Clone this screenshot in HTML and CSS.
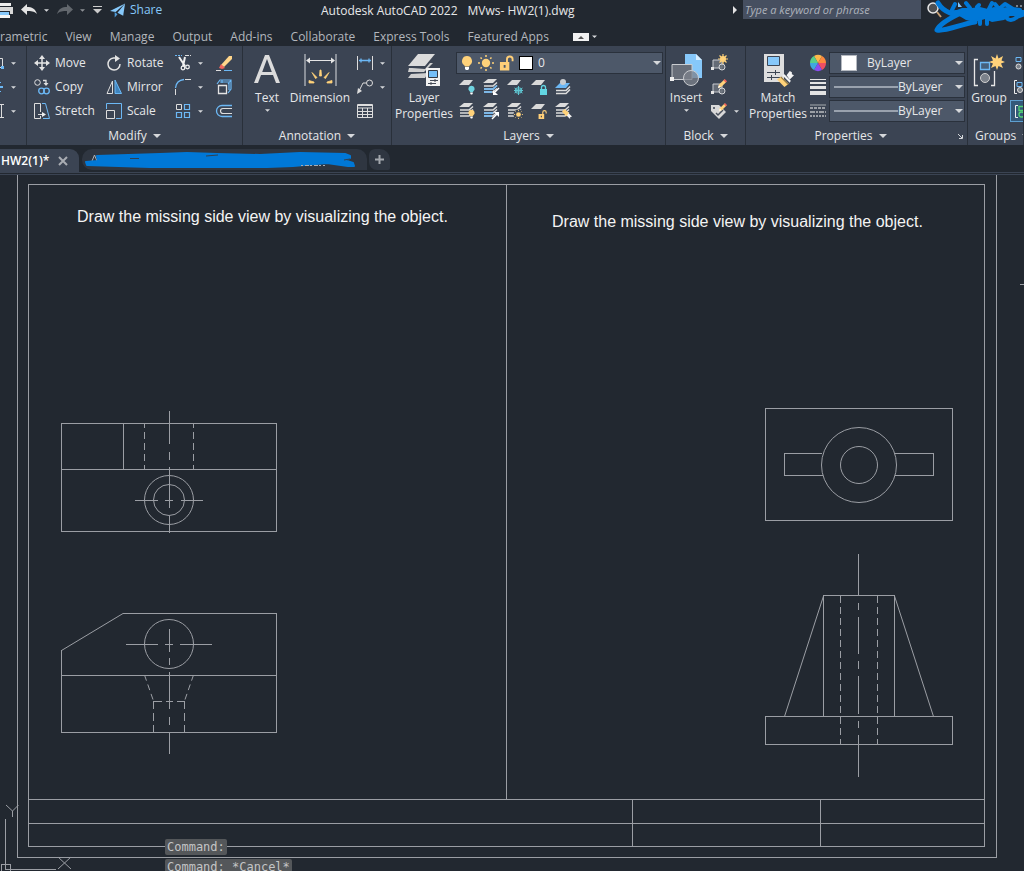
FILE: index.html
```html
<!DOCTYPE html>
<html lang="en">
<head>
<meta charset="utf-8">
<title>Autodesk AutoCAD 2022 - MVws- HW2(1).dwg</title>
<link rel="stylesheet" href="styles.css">
</head>
<body>
<svg class="defs" aria-hidden="true">
  <symbol id="down" viewBox="0 0 8 4"><path d="M0 0h8L4 4z" fill="#d6d8db"/></symbol>
  <symbol id="sheet" viewBox="0 0 16 16"><path d="M5 1h9l-4 5H0z" fill="#d9d9d9"/></symbol>
  <symbol id="stack" viewBox="0 0 16 16"><path d="M5 0h9l-4 4H0z" fill="#dcdcdc"/><path d="M1 7h9l4-3.500M1 10h9l4-3.500M1 13h9l4-3.500" fill="none" stroke="#dcdcdc" stroke-width="1.500"/></symbol>
  <symbol id="bulb" viewBox="0 0 12 16"><path d="M6 1a5 5 0 0 1 3 9L8 11.500H4L3 10a5 5 0 0 1 3-9z" fill="currentColor"/><path d="M4 12h4v2L7 15H5l-1-1z" fill="#fff"/></symbol>
  <symbol id="sun" viewBox="0 0 16 16"><circle cx="8" cy="8" r="4.200" fill="#ffd27a"/><path d="M8 0v2M8 14v2M0 8h2M14 8h2M2.500 2.500l1.300 1.300M12.200 12.200l1.300 1.300M2.500 13.500l1.300-1.300M12.200 3.800l1.300-1.300" stroke="#ffd27a" stroke-width="1.500"/></symbol>
  <symbol id="unlock" viewBox="0 0 16 16"><path d="M1 7h10v9H1zM5 10v3h2v-3z" fill="#ffcf78" fill-rule="evenodd"/><path d="M8.500 7V4a3 3 0 0 1 6 0v2" fill="none" stroke="#ffcf78" stroke-width="2"/></symbol>
  <symbol id="pencil" viewBox="0 0 10 10"><path d="M0 10l1-3.500L7 .5 9.500 3 3.500 9z" fill="#ffd27a"/><path d="M6 1.500L7.500 0 10 2.500 8.500 4z" fill="#f0635a"/><path d="M0 10l1-3 2 2z" fill="#fff"/></symbol>
  <symbol id="brush" viewBox="0 0 16 16"><path d="M9 5l3-4 2 1v2l2 1-4 4z" fill="#f3f3f3"/><path d="M7 4l6 6-1 2-7-7z" fill="#f3f3f3"/><path d="M4 6l7 7-4 3-7-7z" fill="#ffd27a"/><path d="M3.500 6.500l7 7" stroke="#8a7444"/></symbol>
  <symbol id="brush-flip" viewBox="0 0 16 16"><path d="M7 6l4 1 5 5-3 1v3l-3-3-3-3z" fill="#f3f3f3"/><path d="M0 4l4-4 7 6-4 6z" fill="#ffd27a"/></symbol>
  <symbol id="block" viewBox="0 0 16 16"><path d="M2 5h9v8H2z" fill="#646b76" stroke="#c7cacf"/><circle cx="11" cy="12" r="3" fill="#646b76" fill-opacity=".8" stroke="#d5d7da"/><path d="M0 12h3v3H0z" fill="#e5e5e5"/></symbol>
</svg>

<header class="titlebar">
  <div class="quick">
    <button class="ico" aria-label="Print"><svg width="14" height="18" viewBox="0 0 14 18"><path d="M0 2h11v3H0z" fill="#eee"/><path d="M0 6h13v7h-3v-3H0z" fill="#d8d8d8"/><path d="M0 11h9v3H0z" fill="#86c8fa"/><path d="M0 14h10v3H0z" fill="#f4f4f4"/></svg></button>
    <button class="ico undo" aria-label="Undo"><svg width="16" height="12" viewBox="0 0 16 12"><path d="M6 0v3c5 0 8 1.500 10 7-3-3-6-3-10-3v4L0 5.500z" fill="#e4e4e4"/></svg></button>
    <button class="ico drop" aria-label="Undo list"><svg width="5" height="3"><use href="#down"/></svg></button>
    <button class="ico redo" aria-label="Redo"><svg width="16" height="12" viewBox="0 0 16 12"><path d="M10 0v3C5 3 2 4.500 0 10c3-3 6-3 10-3v4l6-5.500z" fill="#62676d"/></svg></button>
    <button class="ico drop" aria-label="Redo list"><svg width="5" height="3" opacity=".6"><use href="#down"/></svg></button>
    <button class="ico custom" aria-label="Customize"><svg width="9" height="8" viewBox="0 0 9 8"><path d="M0 .5h9" stroke="#ccc"/><path d="M0 3h9L4.500 7.500z" fill="#ccc"/></svg></button>
    <button class="share"><svg width="16" height="15" viewBox="0 0 17 15"><path d="M0 8L16 0 6 9z" fill="#86c8fa"/><path d="M16 0l-2 13-6-3z" fill="#86c8fa"/><path d="M5 9v6l3-3.500" fill="#4f9cd8"/></svg>Share</button>
  </div>
  <h1 class="app"><span>Autodesk AutoCAD 2022</span><span>MVws- HW2(1).dwg</span></h1>
  <div class="search">
    <svg width="4" height="8" viewBox="0 0 4 8"><path d="M0 0l4 4-4 4z" fill="#e3e3e3"/></svg>
    <input type="text" aria-label="Search" placeholder="Type a keyword or phrase">
    <button class="ico" aria-label="Find"><svg width="17" height="18" viewBox="0 0 17 18"><path d="M11 11l4 5" stroke="#c8a074" stroke-width="2"/><circle cx="7" cy="7" r="5" fill="#4d4f52" stroke="#e8e8e8" stroke-width="1.500"/></svg></button>
  </div>
  <svg class="mark-user" width="92" height="36" viewBox="0 0 92 36"><path d="M26 2l4 5h-4z" fill="#86c8fa"/><path d="M84 6h8" stroke="#d6dbe0" stroke-dasharray="2 2"/><path d="M20 12l10-4 10 0 8-1 8 2 6-2 7 1 7-1 7 3 9 0v6l-14 0-6 4-12 2-7-3-10 3-9-2-5-3z" fill="#0078d7"/><g fill="none" stroke="#0078d7" stroke-linecap="round" stroke-linejoin="round"><path d="M6 3c3 5 7 8 12 10l13-1C20 17 8 23 5 30c8 2 24-6 38-8" stroke-width="5"/><path d="M20 10l3-6M34 3l4 5M45 7l2-2M57 9l3-6M63 4l4 5 6-5 8 5 7 1M48 19l0 5M55 19l0 5M73 13c1 9 8 8 12 4l8-3" stroke-width="4"/></g></svg>
</header>

<nav class="menu">
  <a href="#">rametric</a><a href="#">View</a><a href="#">Manage</a><a href="#">Output</a><a href="#">Add-ins</a><a href="#">Collaborate</a><a href="#">Express Tools</a><a href="#">Featured Apps</a>
  <button class="ico min" aria-label="Minimize ribbon"><svg width="25" height="8" viewBox="0 0 25 8"><path d="M0 0h16v8H0z" fill="#f2f2f2"/><path d="M5 6l3-3 3 3z" fill="#555"/><path d="M19 2.500h5L21.500 5z" fill="#d6d8db"/></svg></button>
</nav>

<main>
<div class="ribbon">
  <section class="panel draw">
    <div class="tools">
      <button class="ico" aria-label="Rectangle"><svg width="5" height="16" viewBox="0 0 5 16"><path d="M0 3.500h2.500V12M0 12.500h2" stroke="#ddd" fill="none"/><path d="M1 11h3v3H1z" fill="#6cb8f5"/></svg></button><button class="ico drop" aria-label="Rectangle list"><svg width="5" height="3"><use href="#down"/></svg></button>
      <button class="ico" aria-label="Ellipse"><svg width="5" height="16" viewBox="0 0 5 16"><path d="M0 7h3v2H0zM0 3h1v1H0zM0 12h1v1H0z" fill="#6cb8f5"/></svg></button><button class="ico drop" aria-label="Ellipse list"><svg width="5" height="3"><use href="#down"/></svg></button>
      <button class="ico" aria-label="Hatch"><svg width="5" height="16" viewBox="0 0 5 16"><path d="M0 1.500h4M0 14.500h4M1.500 1v14" stroke="#ddd"/></svg></button><button class="ico drop" aria-label="Hatch list"><svg width="5" height="3"><use href="#down"/></svg></button>
    </div>
  </section>

  <section class="panel modify">
    <div class="tools">
      <button class="tool"><svg width="16" height="16" viewBox="0 0 16 16"><path d="M8 2v12M2 8h12" stroke="#e4e4e4" stroke-width="1.500"/><path d="M8 0l3 4H5zM8 16l3-4H5zM0 8l4-3v6zM16 8l-4-3v6z" fill="#e4e4e4"/></svg>Move</button>
      <button class="tool"><svg width="16" height="16" viewBox="0 0 16 16"><path d="M10 3H7.500A6 6 0 1 0 14 9" fill="none" stroke="#e4e4e4" stroke-width="1.500"/><path d="M9 0l5 3.500L9 7z" fill="#e4e4e4"/></svg>Rotate</button>
      <span class="pair"><button class="ico" aria-label="Trim"><svg width="16" height="16" viewBox="0 0 16 16"><path d="M0 .5h7" stroke="#6cb8f5" stroke-dasharray="2 1"/><path d="M10 .5h6" stroke="#ddd" stroke-dasharray="4 1"/><path d="M4 2l6 9M10 2L8 11" stroke="#f1f1f1" stroke-width="2"/><circle cx="8" cy="13" r="1.800" fill="none" stroke="#eee" stroke-width="1.300"/><circle cx="12.500" cy="12" r="1.800" fill="none" stroke="#eee" stroke-width="1.300"/></svg></button><button class="ico drop" aria-label="Trim list"><svg width="5" height="3"><use href="#down"/></svg></button></span>
      <button class="ico" aria-label="Erase"><svg width="16" height="16" viewBox="0 0 16 16"><path d="M5 10L13 1h3v3l-8 8z" fill="#ffd58a"/><path d="M5 9l4 4-3 1-3-1z" fill="#f2645b"/><path d="M0 15.500h5" stroke="#ddd"/><path d="M8 15.500h8" stroke="#6cb8f5"/></svg></button>

      <button class="tool"><svg width="16" height="16" viewBox="0 0 16 16"><circle cx="3.500" cy="3.500" r="2.800" fill="none" stroke="#e0e0e0"/><path d="M9 1.500h3V5" fill="none" stroke="#e0e0e0" stroke-width="1.300"/><path d="M9.500 4h5L12 7z" fill="#e0e0e0"/><g fill="none" stroke="#6cb8f5" stroke-width="1.300"><circle cx="7.500" cy="12" r="2.800"/><circle cx="12.500" cy="12" r="2.800"/></g></svg>Copy</button>
      <button class="tool"><svg width="16" height="16" viewBox="0 0 16 16"><path d="M6.500 2v12.500H1z" fill="none" stroke="#ddd"/><path d="M9 1l6.500 13.500H9z" fill="#3f84bd" stroke="#6cb8f5"/></svg>Mirror</button>
      <span class="pair"><button class="ico" aria-label="Fillet"><svg width="16" height="16" viewBox="0 0 16 16"><path d="M.5 9C1 4 4 1 9 .5" fill="none" stroke="#6cb8f5" stroke-width="1.300"/><path d="M10 .5h6M.5 10v6" stroke="#ddd"/></svg></button><button class="ico drop" aria-label="Fillet list"><svg width="5" height="3"><use href="#down"/></svg></button></span>
      <button class="ico" aria-label="Explode"><svg width="16" height="16" viewBox="0 0 16 16"><path d="M1 5l3-4h11v9l-3 4M12 5l3-4M6 1v3M4 3h9v8" fill="none" stroke="#6cb8f5" stroke-width="1.200"/><path d="M2.500 6.500h8v8h-8z" fill="#3b4453" stroke="#e4e4e4" stroke-width="1.300"/></svg></button>

      <button class="tool"><svg width="16" height="16" viewBox="0 0 16 16"><path d="M6.500 9V.5h-6v15h6V13M4 11.500h6" fill="none" stroke="#ddd"/><path d="M8 9l4 2.500L8 14z" fill="#eee"/><path d="M8 .5h3.500l4 15H9" fill="none" stroke="#6cb8f5"/></svg>Stretch</button>
      <button class="tool"><svg width="16" height="16" viewBox="0 0 16 16"><path d="M.5 6V.5h15v15H10" fill="none" stroke="#6cb8f5"/><path d="M.5 7.500h8v8h-8z" fill="none" stroke="#ddd"/></svg>Scale</button>
      <span class="pair"><button class="ico" aria-label="Array"><svg width="16" height="16" viewBox="0 0 16 16"><path d="M1.500 1.500h5v5h-5z" fill="none" stroke="#ddd"/><path d="M9.500 1.500h5v5h-5zM1.500 9.500h5v5h-5zM9.500 9.500h5v5h-5z" fill="none" stroke="#6cb8f5" stroke-width="1.200"/></svg></button><button class="ico drop" aria-label="Array list"><svg width="5" height="3"><use href="#down"/></svg></button></span>
      <button class="ico" aria-label="Offset"><svg width="16" height="16" viewBox="0 0 16 16"><path d="M16 2.500H6a5.500 5.500 0 0 0 0 11h10" fill="none" stroke="#6cb8f5" stroke-width="1.300"/><path d="M16 5.500H7a2.500 2.500 0 0 0 0 5h9" fill="none" stroke="#ddd" stroke-width="1.200"/></svg></button>
    </div>
    <h2>Modify <svg width="8" height="4"><use href="#down"/></svg></h2>
  </section>

  <section class="panel annot">
    <div class="row">
      <button class="big text"><svg width="26" height="32" viewBox="0 0 26 32"><path d="M0 29L11 1h4l11 28h-4l-3-8H7l-3 8zM8.200 18h9.600L13 5z" fill="#dcdcdc" fill-rule="evenodd"/></svg>Text<svg class="sub" width="5" height="3"><use href="#down"/></svg></button>
      <button class="big dim"><svg width="33" height="32" viewBox="0 0 33 32"><path d="M1 0v32M32 0v32" stroke="#8a9099" stroke-width="2"/><path d="M4 6.500h25" stroke="#e5e5e5"/><path d="M2 6.500l4-3v6zM31 6.500l-4-3v6z" fill="#e5e5e5"/><path d="M5 26.500l5 1.500v1H5zM28 26.500l-5 1.500v1h5zM8 18.500l5 5-1.500 1zM25 18.500l-5 5 1.500 1zM16 16h1l.5 6h-2z" fill="#ffd27a" stroke="#ffd27a" stroke-width=".8"/></svg>Dimension</button>
      <div class="mini">
        <span class="pair"><button class="ico" aria-label="Linear"><svg width="16" height="16" viewBox="0 0 16 16"><path d="M.5 1v14M15.500 1v14" stroke="#ddd"/><path d="M2 5.500h12M4 3.500v4M12 3.500v4" stroke="#6cb8f5" stroke-width="1.300"/></svg></button><button class="ico drop" aria-label="Linear list"><svg width="5" height="3"><use href="#down"/></svg></button></span>
        <span class="pair"><button class="ico" aria-label="Leader"><svg width="16" height="16" viewBox="0 0 16 16"><circle cx="12.500" cy="4" r="3" fill="none" stroke="#ddd"/><path d="M9 4H6L2 12" fill="none" stroke="#ddd"/><path d="M0 15l1-6 4 3z" fill="#ddd"/></svg></button><button class="ico drop" aria-label="Leader list"><svg width="5" height="3"><use href="#down"/></svg></button></span>
        <button class="ico" aria-label="Table"><svg width="16" height="14" viewBox="0 0 16 14"><path d="M.5.5h15v13H.5zM0 4h16M0 7.500h16M0 10.500h16M5.500 4v9M10.500 4v9" fill="none" stroke="#ddd"/><path d="M0 1.500h16" stroke="#ddd" stroke-width="1"/></svg></button>
      </div>
    </div>
    <h2>Annotation <svg width="8" height="4"><use href="#down"/></svg></h2>
  </section>

  <section class="panel layers">
    <div class="row">
      <button class="big wide"><svg width="32" height="32" viewBox="0 0 32 32"><path d="M10 0h17L17 12H0z" fill="#dcdcdc"/><path d="M4 14H1l-1 4h16l9-9h-3l-5 6zM3 20l-3 4h17l3-5z" fill="#cfcfcf"/><path d="M18 14h14v18H18z" fill="#f2f2f2"/><path d="M20.500 16.500h9v7h-9z" fill="#75bff8" stroke="#333a45"/><path d="M22 26.500h8M20 29.500h8M27 25v3M23 28v3" stroke="#444b57"/></svg><span>Layer<br>Properties</span></button>
      <div class="stackcol">
        <div class="combo layer">
          <svg width="12" height="16" color="#ffd27a"><use href="#bulb"/></svg><svg width="16" height="16"><use href="#sun"/></svg><svg width="15" height="16"><use href="#unlock"/></svg><i class="swatch dark"></i>
          <select aria-label="Layer"><option>0</option></select><svg class="tip" width="8" height="4"><use href="#down"/></svg>
        </div>
        <div class="icons">
          <button class="ico" aria-label="Off"><svg width="16" height="16"><use href="#sheet"/><svg x="8" y="6" width="9" height="10" viewBox="0 0 12 16" color="#6fd3e0"><use href="#bulb"/></svg></svg></button>
          <button class="ico" aria-label="Isolate"><svg width="16" height="16" viewBox="0 0 16 16"><use href="#stack"/><path d="M1 10h9l4-3.500M1 13h8" fill="none" stroke="#6cb8f5" stroke-width="1.600"/><path d="M16 9l-4 4" stroke="#fff" stroke-width="1.500"/><path d="M10 11v5h5z" fill="#fff"/></svg></button>
          <button class="ico" aria-label="Freeze"><svg width="16" height="16" viewBox="0 0 16 16"><use href="#sheet"/><path d="M11.500 7v9M7.500 9l8 5M7.500 14l8-5M7 11.500h9M9.500 9h4l1.500 2.500-1.500 2.500h-4L8 11.500z" fill="none" stroke="#5fc6d2"/></svg></button>
          <button class="ico" aria-label="Lock"><svg width="16" height="16" viewBox="0 0 16 16"><use href="#sheet"/><path d="M9 10h7v6H9z" fill="#62d6e3"/><path d="M10.500 10V8.500a2 2 0 0 1 4 0V10" fill="none" stroke="#62d6e3" stroke-width="1.300"/></svg></button>
          <button class="ico" aria-label="Make current"><svg width="16" height="16" viewBox="0 0 16 16"><path d="M5 4h10l-4 5H0z" fill="#6cb8f5"/><circle cx="8" cy="3" r="3" fill="#c9ccd0"/><path d="M1 11.500h10l4-4M1 14.500h10l4-4" fill="none" stroke="#dcdcdc" stroke-width="1.600"/></svg></button>
        </div>
        <div class="icons">
          <button class="ico" aria-label="Turn all on"><svg width="16" height="16"><use href="#stack"/><svg x="8" y="6" width="9" height="10" viewBox="0 0 12 16" color="#ffd27a"><use href="#bulb"/></svg></svg></button>
          <button class="ico" aria-label="Unisolate"><svg width="16" height="16" viewBox="0 0 16 16"><use href="#stack"/><path d="M1 10h9M1 13h8" stroke="#6cb8f5" stroke-width="1.600"/><path d="M9 16l5-5" stroke="#fff" stroke-width="1.500"/><path d="M11 9h5v5z" fill="#fff"/></svg></button>
          <button class="ico" aria-label="Thaw"><svg width="16" height="16"><use href="#stack"/><circle cx="11.500" cy="11.500" r="5" fill="#3b4453"/><use href="#sun" x="7" y="7" width="9" height="9"/></svg></button>
          <button class="ico" aria-label="Unlock"><svg width="16" height="16"><use href="#sheet"/><use href="#unlock" x="7" y="7" width="9" height="9"/></svg></button>
          <button class="ico" aria-label="Match layer"><svg width="16" height="16"><use href="#stack"/><use href="#brush-flip" x="7" y="6" width="10" height="10"/></svg></button>
        </div>
      </div>
    </div>
    <h2>Layers <svg width="8" height="4"><use href="#down"/></svg></h2>
  </section>

  <section class="panel blk">
    <div class="row">
      <button class="big insert"><svg width="32" height="32" viewBox="0 0 32 32"><path d="M15 0h11l6 6v18H15z" fill="#86c8fa"/><path d="M26 0v6h6z" fill="#d8eefe"/><path d="M2 10.500h20v15H2z" fill="#686e79" stroke="#c9ccd0"/><circle cx="21" cy="24" r="7.500" fill="#7c828b" fill-opacity=".75" stroke="#c9ccd0"/><path d="M0 23h4v4H0z" fill="#eee"/></svg>Insert<svg class="sub" width="5" height="3"><use href="#down"/></svg></button>
      <div class="mini">
        <button class="ico" aria-label="Create block"><svg width="16" height="16"><use href="#block"/><circle cx="12" cy="4" r="3" fill="#ffd27a"/><path d="M12-1v10M7 4h10M8.500.5l7 7M15.500.5l-7 7" stroke="#ffd27a" stroke-width="1.200"/></svg></button>
        <button class="ico" aria-label="Edit block"><svg width="16" height="16"><use href="#block"/><use href="#pencil" x="7" y="0" width="9" height="9"/></svg></button>
        <span class="pair"><button class="ico" aria-label="Edit attributes"><svg width="16" height="16" viewBox="0 0 16 16"><path d="M0 2h8l7 7-7 7L0 8z" fill="#d8d8d8"/><circle cx="3" cy="5" r="1" fill="#3b4453"/><path d="M5 10l2 2 5-5" fill="none" stroke="#4a515d" stroke-width="1.500"/><use href="#pencil" x="8" y="0" width="8" height="8"/></svg></button><button class="ico drop" aria-label="Attributes list"><svg width="5" height="3"><use href="#down"/></svg></button></span>
      </div>
    </div>
    <h2>Block <svg width="8" height="4"><use href="#down"/></svg></h2>
  </section>

  <section class="panel props">
    <div class="row">
      <button class="big wide"><svg width="32" height="32" viewBox="0 0 32 32"><path d="M2 0h20v28H2z" fill="#dedede"/><path d="M5.500 2.500h12v9h-12z" fill="#86c8fa" stroke="#3d4654"/><path d="M5 18.500h13M5 23.500h13M13.500 16v5M9.500 21v5" stroke="#3d4654"/><use href="#brush" x="15" y="16" width="17" height="17"/></svg><span>Match<br>Properties</span></button>
      <div class="rows">
        <svg width="16" height="16" viewBox="0 0 16 16"><path d="M8 8L4 1a8 8 0 0 1 8 0z" fill="#ffb84a"/><path d="M8 8l4-7a8 8 0 0 1 4 7z" fill="#ff8a3d"/><path d="M8 8h8a8 8 0 0 1-4 7z" fill="#ef4f62"/><path d="M8 8l4 7a8 8 0 0 1-8 0z" fill="#8a4df0"/><path d="M8 8l-4 7a8 8 0 0 1-4-7z" fill="#3fa8e0"/><path d="M8 8H0a8 8 0 0 1 4-7z" fill="#58cf8a"/></svg>
        <div class="combo"><i class="swatch"></i><select aria-label="Color"><option>ByLayer</option></select><svg class="tip" width="8" height="4"><use href="#down"/></svg></div>
        <svg width="16" height="16" viewBox="0 0 16 16"><path d="M0 .5h16" stroke="#e4e4e4"/><path d="M0 4h16" stroke="#e4e4e4" stroke-width="2"/><path d="M0 8.500h16" stroke="#e4e4e4" stroke-width="3"/><path d="M0 14h16" stroke="#e4e4e4" stroke-width="4"/></svg>
        <div class="combo"><i class="rule"></i><select aria-label="Lineweight"><option>ByLayer</option></select><svg class="tip" width="8" height="4"><use href="#down"/></svg></div>
        <svg width="16" height="14" viewBox="0 0 16 14"><path d="M0 1h16" stroke="#83898f" stroke-width="1.500"/><path d="M0 4h16" stroke="#9b9fa5" stroke-width="2" stroke-dasharray="3 1"/><path d="M0 8h16" stroke="#9b9fa5" stroke-width="2" stroke-dasharray="5 1 2 1"/><path d="M0 12h16" stroke="#9b9fa5" stroke-width="2" stroke-dasharray="2 1"/></svg>
        <div class="combo"><i class="rule"></i><select aria-label="Linetype"><option>ByLayer</option></select><svg class="tip" width="8" height="4"><use href="#down"/></svg></div>
      </div>
    </div>
    <h2>Properties <svg width="8" height="4"><use href="#down"/></svg><svg class="launch" width="5" height="5" viewBox="0 0 5 5"><path d="M0 0l4 4M4.500 1v3.500H1" fill="none" stroke="#d6d8db"/></svg></h2>
  </section>

  <section class="panel groups">
    <div class="row">
      <button class="big group"><svg width="32" height="32" viewBox="0 0 32 32"><path d="M5 5.500H1.500v26H5M18 31.500h3.500V17" fill="none" stroke="#e8e8e8" stroke-width="1.300"/><path d="M7.500 8.500h9v7h-9z" fill="#46607c" stroke="#6cb8f5" stroke-width="1.300"/><circle cx="12" cy="24" r="4.500" fill="#7c828b" stroke="#d0d0d0"/><path d="M24 0l1.500 4.500L30 2l-1.500 4.500L32 8l-4 1.500L30 14l-4.500-2L24 16l-1.500-4L18 14l2-4.500L16 8l4-1.500L18 2l4.500 2.500z" fill="#ffd27a"/></svg>Group</button>
      <div class="mini edge">
        <button class="ico" aria-label="Ungroup"><svg width="12" height="16" viewBox="0 0 12 16"><path d="M3 2.500h5v4H3z" fill="none" stroke="#6cb8f5"/><circle cx="5.500" cy="11.500" r="2.500" fill="#7c828b" stroke="#ddd"/></svg></button>
        <button class="ico" aria-label="Group edit"><svg width="12" height="16" viewBox="0 0 12 16"><path d="M4 1.500H1.500v13H4" fill="none" stroke="#eee"/><path d="M4 3.500h5v4H4z" fill="none" stroke="#6cb8f5"/><circle cx="7" cy="11" r="2.500" fill="#7c828b" stroke="#ddd"/></svg></button>
        <button class="ico on" aria-label="Group selection"><svg width="12" height="16" viewBox="0 0 12 16"><path d="M4 2.500H1.500v12H4" fill="none" stroke="#eee"/><path d="M5 3.500h5v4H5z" fill="none" stroke="#52d273" stroke-width="1.300"/><circle cx="7.500" cy="11.500" r="2.500" fill="none" stroke="#52d273" stroke-width="1.300"/></svg></button>
      </div>
    </div>
    <h2>Groups <svg width="8" height="4"><use href="#down"/></svg></h2>
  </section>
</div>

<div class="files">
  <div class="file active">HW2(1)*<button class="ico" aria-label="Close"><svg width="10" height="10" viewBox="0 0 10 10"><path d="M1 1l8 8M9 1L1 9" stroke="#a9adb3" stroke-width="2"/></svg></button></div>
  <div class="file hidden-name">
    <svg width="276" height="18" viewBox="0 0 276 18"><path d="M10 10l2.500-6 2.500 6" fill="none" stroke="#b0b4ba"/><path d="M15 5l63-2 27-1 30 1 43 1 40-2 45 1 5 2v2l-6 2 9 3 1 3-6 0-21-3-34 3-26 1H68L5 14l-1-3 12-1z" fill="#0078d7" stroke="#0078d7" stroke-width="2" stroke-linejoin="round"/><path d="M48 7.500h9M124 5l12-1M262 9l6-1" stroke="#31404f"/><path d="M219 14.500h24" stroke="#a5abb4" stroke-dasharray="2 2 4 1"/></svg>
  </div>
  <button class="file plus" aria-label="New tab"><svg width="9" height="9" viewBox="0 0 9 9"><path d="M4.500 0v9M0 4.500h9" stroke="#a3a7ad" stroke-width="2"/></svg></button>
</div>

<div class="canvas">
  <svg class="drawing" viewBox="0 175 1024 696" preserveAspectRatio="xMinYMin slice">
    <g class="ln crisp">
      <path d="M17.500 175V857.500H996.500V175"/>
      <path d="M28.500 184.500H984.500V846.500H28.500zM506.500 184V799M28 799.500H984M28 823.500H984M632.500 799V846M820.500 799V846"/>
      <path d="M61.500 423.500H276.500V531.500H61.500zM61 469.500H276M123.500 423V469"/>
      <path d="M169.500 411V444M169.500 452V460M169.500 467V508M169.500 516V533M135 500.500H158M165 500.500H173M181 500.500H203"/>
      <path d="M144.500 423V469M193.500 423V469" stroke-dasharray="4.500 4 7 4 7 4 7 4 7 4"/>
      <path d="M61.500 650V732.500H276.500V613.500H123M61 675.500H276"/>
      <path d="M169.500 629V652M169.500 658V665M169.500 672V709M169.500 717V725M169.500 732V754M126 644.500H158M165 644.500H173M180 644.500H212"/>
      <path d="M153.500 701V733M184.500 701V733" stroke-dasharray="8 4 8 4 8"/><path d="M153 701.500H162M166 701.500H173M177 701.500H185"/>
      <path d="M765.500 408.500H952.500V520.500H765.500zM822 453.500H784.500V475.500H823M895 453.500H933.500V475.500H895"/>
      <path d="M823.500 716V595.500H894.500V716M765.500 716.500H952.500V744.500H765.500z"/>
      <path d="M858.500 554V595M858.500 603V610M858.500 617V654M858.500 661V669M858.500 676V714M858.500 721V728M858.500 735V777"/>
      <path d="M840.500 596V745M877.500 596V745" stroke-dasharray="7 4"/>
      <path d="M5.500 819V869.500H56M1.500 864.500H10.500V871M1.500 864V871M1020 284.500H1024"/>
    </g>
    <g class="ln">
      <circle cx="169" cy="500" r="24.500"/><circle cx="169" cy="500" r="15.500"/>
      <circle cx="169" cy="644" r="24.500"/>
      <path d="M61.500 650.500L123 613.500"/>
      <path d="M144.500 675L153.500 701M193.500 675L184.500 701" stroke-dasharray="6 4"/>
      <circle cx="859" cy="465" r="37.500"/><circle cx="859" cy="465" r="18.500"/>
      <path d="M823.500 596L784.500 716.500M894.500 596L933.500 716.500"/>
      <path d="M6 805l6.500 6L18.500 805M12.500 811v6M58 857l13 12M71 857L58 869"/>
    </g>
    <text x="77" y="222">Draw the missing side view by visualizing the object.</text>
    <text x="552" y="227">Draw the missing side view by visualizing the object.</text>
  </svg>
  <div class="history"><span>Command:</span><span>Command: *Cancel*</span></div>
</div>
</main>
</body>
</html>
```

FILE: styles.css
```css
* { box-sizing: border-box; }
body {
  margin: 0;
  height: 100vh;
  display: flex;
  flex-direction: column;
  overflow: hidden;
  background: #222830;
  color: #e6e7e9;
  font: 12px/16px "Open Sans", "Noto Sans", sans-serif;
}
.defs { position: absolute; width: 0; height: 0; }
button { font: inherit; color: inherit; background: none; border: 0; padding: 0; }
svg { flex: none; display: block; overflow: visible; }
h1, h2 { margin: 0; font: inherit; }
main { flex: 1; display: flex; flex-direction: column; min-height: 0; }
.ico { display: flex; align-items: center; justify-content: center; flex: none; }

.titlebar { position: relative; display: flex; height: 24px; align-items: flex-start; }
.quick { flex: 0 0 321px; display: flex; align-items: center; height: 20px; }
.undo { margin-left: 7px; }
.redo { margin-left: 8px; }
.quick .drop { margin-left: 7px; }
.custom { margin-left: 8px; }
.share { display: flex; align-items: center; gap: 4px; margin-left: 8px; color: #86c8fa; }
.app { display: flex; gap: 10px; line-height: 22px; white-space: nowrap; }
.search { display: flex; align-items: center; margin-left: auto; padding-right: 81px; }
.search input {
  width: 178px;
  height: 19px;
  margin: 0 5px 0 6px;
  padding: 0 2px;
  border: 0;
  background: #464f60;
  color: #fff;
  font: italic 11px/18px "Open Sans", "Noto Sans", sans-serif;
}
.search input::placeholder { color: #aeb3bc; opacity: 1; }
.mark-user { position: absolute; top: 0; right: 0; }

.menu { display: flex; align-items: center; height: 22px; gap: 18px; padding-top: 4px; white-space: nowrap; }
.menu a { color: #b3b7bd; text-decoration: none; }
.min { margin-left: 6px; }

.ribbon { display: flex; height: 99px; background: #3b4453; overflow: hidden; flex: none; }
.panel { display: flex; flex-direction: column; justify-content: space-between; padding-top: 5px; border-right: 1px solid #29303a; flex: none; }
.panel h2 { position: relative; display: flex; justify-content: center; align-items: center; gap: 6px; height: 18px; }
.row { display: flex; }
.tools { display: grid; grid-template-rows: repeat(3, 24px); align-items: center; justify-items: start; }
.draw { width: 27px; }
.draw .tools { grid-template-columns: 11px 8px; }
.modify { width: 216px; }
.modify .tools { grid-template-columns: 72px 69px 41px 18px; padding-left: 7px; }
.tool { display: flex; align-items: center; gap: 5px; }
.pair { display: flex; align-items: center; gap: 7px; }
.big { display: flex; flex-direction: column; align-items: center; justify-content: flex-start; padding-top: 3px; text-align: center; }
.big > svg:first-child { margin-bottom: 4px; }
.big .sub { margin-top: 3px; }
.text { width: 48px; flex: none; }
.dim { width: 58px; flex: none; }
.annot { width: 149px; }
.mini { display: grid; grid-template-rows: repeat(3, 24px); align-items: center; justify-items: start; }
.annot .mini { padding-left: 8px; }
.wide { width: 64px; }
.layers { width: 274px; }
.stackcol { flex: 1; padding-right: 2px; display: grid; grid-template-rows: repeat(3, 24px); align-items: center; }
.icons { display: flex; gap: 8px; padding-left: 3px; }
.combo { display: flex; align-items: center; height: 22px; min-width: 0; background: #4d5869; border: 1px solid #2a313c; padding-left: 4px; }
.combo select { appearance: none; flex: 1; min-width: 0; border: 0; background: none; color: inherit; font: inherit; padding: 0; margin: 0; }
.tip { margin-right: 1px; pointer-events: none; }
.layer { gap: 5px; }
.swatch { width: 16px; height: 16px; margin: 0 10px 0 7px; background: #fff; border: 1px solid #b5b9c0; flex: none; }
.swatch.dark { width: 14px; height: 14px; margin: 0; border-color: #000; }
.rule { flex: none; width: 64px; height: 2px; background: #9aa2ae; }
.blk { width: 80px; }
.insert { width: 40px; }
.blk .mini { padding-left: 5px; }
.props { width: 222px; }
.rows { flex: 1; display: grid; grid-template-columns: 16px 1fr; grid-template-rows: repeat(3, 24px); column-gap: 3px; align-items: center; padding-right: 2px; }
.props h2 { padding-right: 12px; }
.launch { position: absolute; right: 4px; bottom: 6px; }
.groups { flex: 1; min-width: 56px; overflow: hidden; }
.group { width: 42px; flex: none; }
.groups h2 { justify-content: flex-start; padding-left: 7px; }
.edge .ico { height: 22px; width: 20px; justify-content: flex-start; padding-left: 3px; }
.edge .on { background: #34597a; border: 1px solid #5e9fd0; }

.files { display: flex; height: 30px; padding-top: 4px; border-bottom: 3px double #3b4453; align-items: stretch; flex: none; }
.file { display: flex; align-items: center; background: #2f3641; border-radius: 10px 10px 0 10px; margin-bottom: 2px; }
.active { width: 79px; margin: 0; padding-left: 1px; gap: 9px; font-weight: 600; color: #fff; background: #3b4453; border-radius: 0 9px 0 0; }
.hidden-name { margin-left: 3px; width: 285px; }
.plus { width: 21px; justify-content: center; margin-left: 2px; border-radius: 6px 10px 2px 8px; }

.canvas { position: relative; flex: 1; min-height: 0; background: #222830; }
.drawing { width: 100%; height: 100%; }
.ln { fill: none; stroke: #9b9ea4; stroke-width: 1; }
.crisp { shape-rendering: crispEdges; }
.drawing text { fill: #f4f4f4; font: 16px "Liberation Sans", Arial, sans-serif; }
.history { position: absolute; left: 165px; bottom: -4px; display: flex; flex-direction: column; align-items: flex-start; gap: 4px; font: 12px/16px "DejaVu Sans Mono", "Liberation Mono", monospace; color: #c4c5c6; }
.history span { padding: 0 2px; border-radius: 2px; background: #54575a; }
```
